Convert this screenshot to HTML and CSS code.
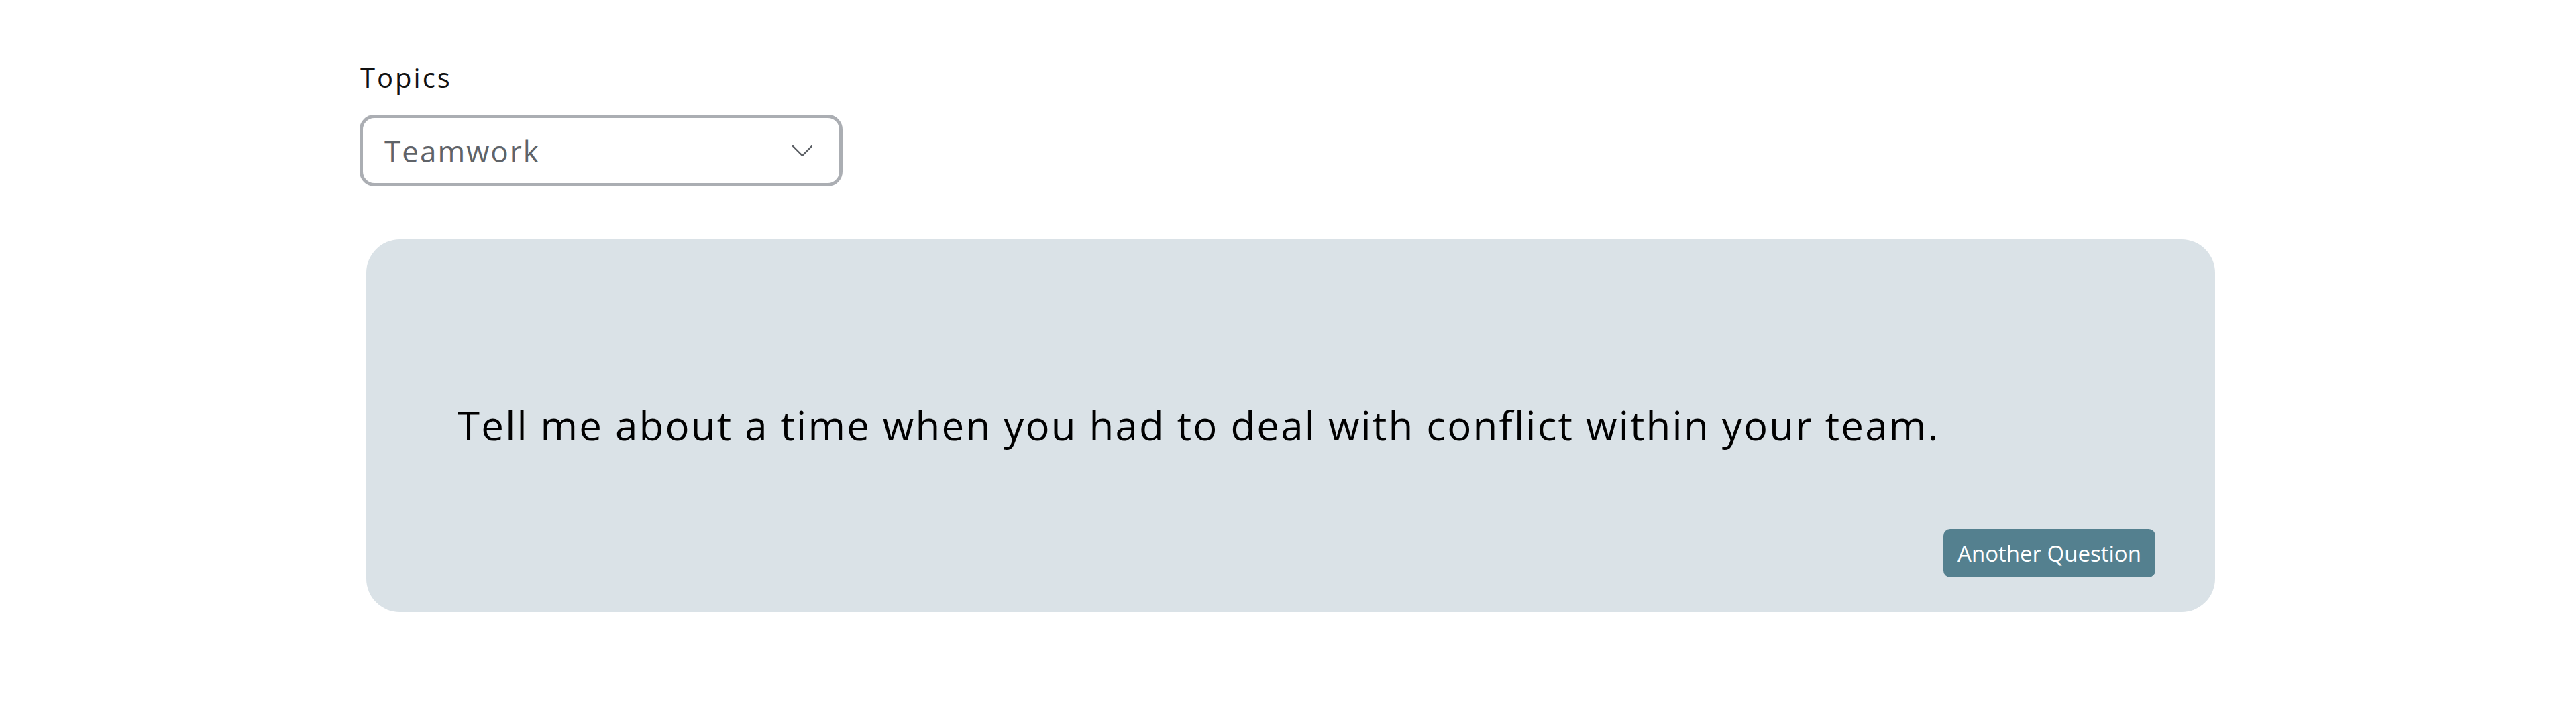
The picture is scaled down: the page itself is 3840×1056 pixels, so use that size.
FILE: index.html
```html
<!DOCTYPE html>
<html lang="en">
<head>
<meta charset="utf-8">
<title>Interview Questions</title>
<link rel="stylesheet" href="styles.css">
</head>
<body>
<main class="page">
  <label class="field-label" for="topic">Topics</label>
  <div class="select">
    <span class="select-value">Teamwork</span>
    <svg class="chevron" width="30" height="16" viewBox="0 0 30 16" aria-hidden="true">
      <path d="M1 1 L15 15 L29 1" fill="none" stroke="#5a5e63" stroke-width="2.4" stroke-linecap="round" stroke-linejoin="round"/>
    </svg>
  </div>
  <section class="card">
    <p class="question">Tell me about a time when you had to deal with conflict within your team.</p>
    <div class="actions">
      <button class="btn" type="button">Another Question</button>
    </div>
  </section>
</main>
</body>
</html>
```
FILE: styles.css
```css
html, body {
  margin: 0;
  padding: 0;
  background: #ffffff;
}
body {
  font-family: "Open Sans", "Liberation Sans", sans-serif;
  color: #000;
}
.page {
  width: 2768px;
  margin: 0 auto;
  padding-top: 92px;
  display: flex;
  flex-direction: column;
  align-items: flex-start;
}
.field-label {
  font-size: 40px;
  line-height: 48px;
  color: #111;
  margin-left: 1px;
  letter-spacing: 3px;
}
.select {
  margin-top: 31px;
  box-sizing: border-box;
  width: 720px;
  height: 107px;
  border: 5px solid #abaeb3;
  border-radius: 22px;
  padding: 0 40px 0 32px;
  display: flex;
  align-items: center;
  justify-content: space-between;
  background: #fff;
}
.select-value {
  font-size: 44px;
  line-height: 60px;
  color: #5f6368;
  letter-spacing: 2px;
}
.chevron {
  display: block;
}
.card {
  margin-top: 79px;
  margin-left: 10px;
  box-sizing: border-box;
  width: 2756px;
  height: 556px;
  background: #dae2e7;
  border-radius: 50px;
  padding: 237px 89px 52px 136px;
  display: flex;
  flex-direction: column;
}
.question {
  margin: 0;
  font-size: 60px;
  line-height: 80px;
  color: #000;
  letter-spacing: 2.2px;
}
.actions {
  margin-top: auto;
  display: flex;
  justify-content: flex-end;
}
.btn {
  width: 316px;
  height: 72px;
  border: none;
  border-radius: 10px;
  background: #54808f;
  color: #fff;
  font-family: "Open Sans", "Liberation Sans", sans-serif;
  font-size: 33px;
  padding: 0;
  cursor: pointer;
}
```
